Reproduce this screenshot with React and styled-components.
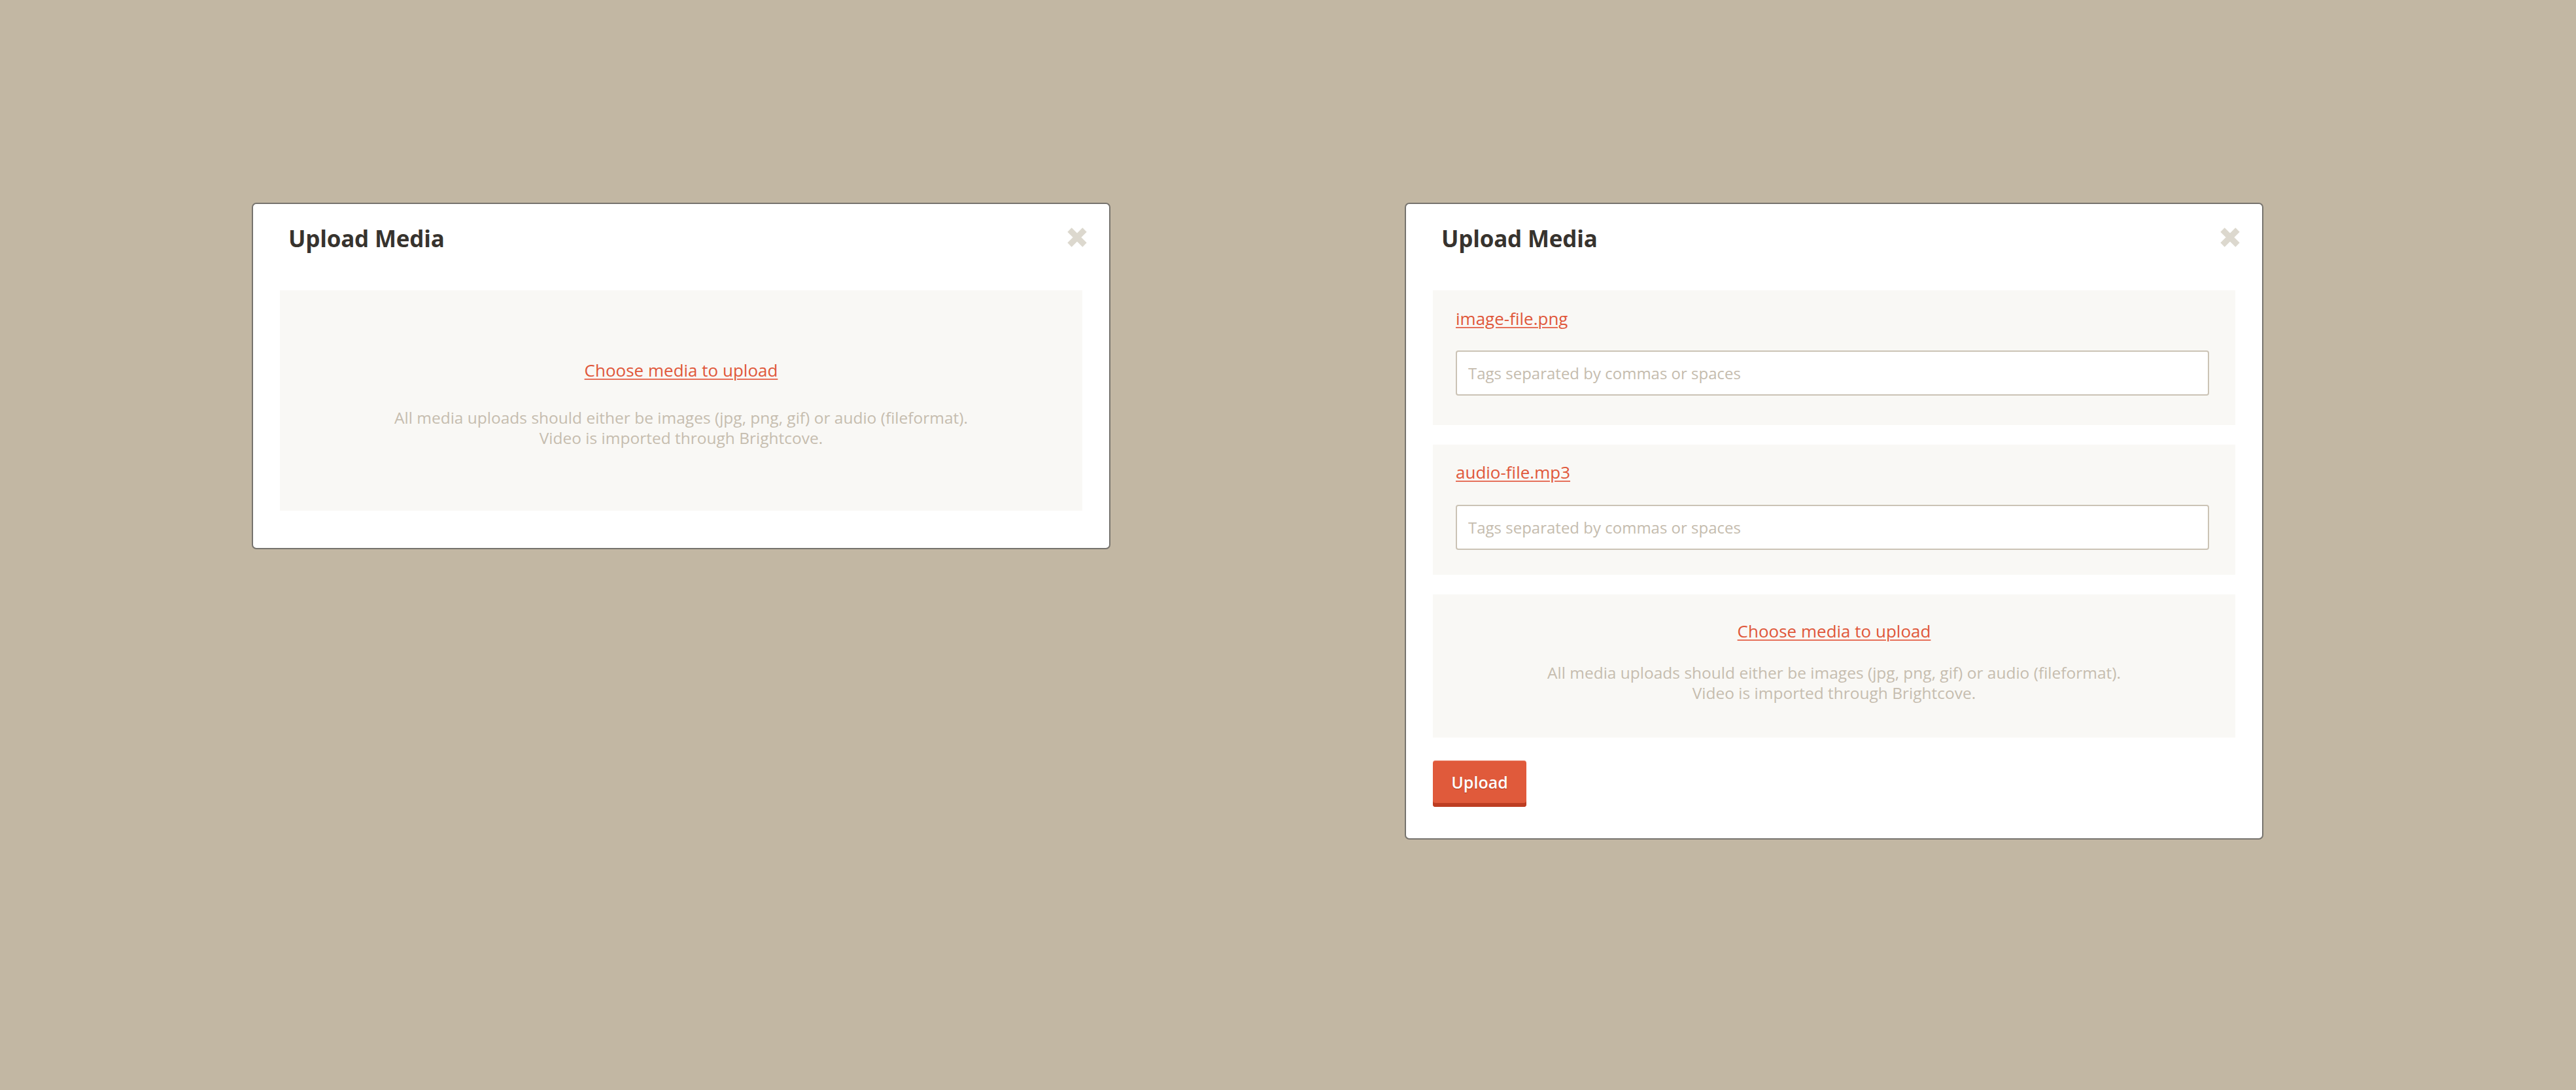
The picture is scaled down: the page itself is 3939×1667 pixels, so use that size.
import React from 'react';
import styled, { createGlobalStyle } from 'styled-components';

const GlobalStyle = createGlobalStyle`
  html, body {
    margin: 0;
    padding: 0;
    background: #c2b7a3;
    min-height: 100%;
  }
  body {
    font-family: 'Open Sans', 'Noto Sans', sans-serif;
    -webkit-font-smoothing: antialiased;
  }
  * {
    box-sizing: border-box;
  }
`;

const files = [
  { name: 'image-file.png', top: 25, gap: 31, bottom: 45 },
  { name: 'audio-file.mp3', top: 24, gap: 32, bottom: 38 },
];

export default function App() {
  return (
    <>
      <GlobalStyle />
      <Page>
        <Modal>
          <Header>
            <Title>Upload Media</Title>
            <CloseButton aria-label="Close">
              <CloseIcon />
            </CloseButton>
          </Header>
          <Body>
            <DropZone $top={104} $gap={39} $bottom={96}>
              <FileLink href="#">Choose media to upload</FileLink>
              <Hint>
                All media uploads should either be images (jpg, png, gif) or audio (fileformat).
                <br />
                Video is imported through Brightcove.
              </Hint>
            </DropZone>
          </Body>
        </Modal>

        <Modal>
          <Header>
            <Title>Upload Media</Title>
            <CloseButton aria-label="Close">
              <CloseIcon />
            </CloseButton>
          </Header>
          <Body>
            {files.map(file => (
              <FileRow key={file.name} $top={file.top} $gap={file.gap} $bottom={file.bottom}>
                <FileLink href="#">{file.name}</FileLink>
                <TagInput placeholder="Tags separated by commas or spaces" />
              </FileRow>
            ))}
            <DropZone $top={38} $gap={30} $bottom={53}>
              <FileLink href="#">Choose media to upload</FileLink>
              <Hint>
                All media uploads should either be images (jpg, png, gif) or audio (fileformat).
                <br />
                Video is imported through Brightcove.
              </Hint>
            </DropZone>
            <UploadButton>Upload</UploadButton>
          </Body>
        </Modal>
      </Page>
    </>
  );
}

function CloseIcon() {
  return (
    <svg width="32" height="32" viewBox="0 0 32 32">
      <path d="M4.5 4.5 L27.5 27.5 M27.5 4.5 L4.5 27.5" stroke="#dcd8ce" strokeWidth="9" fill="none" />
    </svg>
  );
}

const Page = styled.div`
  display: flex;
  align-items: flex-start;
  gap: 450px;
  padding: 310px 0 0 385px;
  min-height: 100vh;
`;

const Modal = styled.div`
  width: 1313px;
  background: #fff;
  border: 2px solid #76736e;
  border-radius: 7px;
  padding: 31px 41px 48px;
  &:first-child {
    padding-bottom: 57px;
  }
`;

const Header = styled.div`
  display: flex;
  align-items: center;
  justify-content: space-between;
  padding-left: 13px;
  margin-right: -8px;
`;

const Title = styled.h2`
  margin: 0;
  font-size: 35px;
  line-height: 44px;
  font-weight: 700;
  color: #37332e;
  letter-spacing: -0.2px;
`;

const CloseButton = styled.button`
  display: flex;
  padding: 0;
  border: 0;
  background: none;
  margin-top: -4px;
  cursor: pointer;
`;

const Body = styled.div`
  display: flex;
  flex-direction: column;
  align-items: flex-start;
  gap: 30px;
  margin-top: 57px;
`;

const Panel = styled.div`
  align-self: stretch;
  display: flex;
  flex-direction: column;
  gap: ${({ $gap }) => $gap}px;
  background: #f9f8f5;
  padding-top: ${({ $top }) => $top}px;
  padding-bottom: ${({ $bottom }) => $bottom}px;
`;

const DropZone = styled(Panel)`
  align-items: center;
  text-align: center;
`;

const FileRow = styled(Panel)`
  align-items: flex-start;
  padding-left: 35px;
  padding-right: 40px;
`;

const FileLink = styled.a`
  font-size: 26px;
  line-height: 36px;
  color: #e0573a;
  text-decoration: underline;
  text-decoration-thickness: 2px;
  text-underline-offset: 3px;
  text-decoration-color: #e6705a;
`;

const Hint = styled.p`
  margin: 0;
  font-size: 24.5px;
  line-height: 31px;
  color: #c6bdaf;
`;

const TagInput = styled.input`
  width: 100%;
  height: 69px;
  border: 2px solid #cbc3b5;
  border-radius: 4px;
  background: #fff;
  padding: 0 17px;
  font-family: inherit;
  font-size: 24px;
  color: #5a544c;
  outline: none;
  &::placeholder {
    color: #c5bcae;
  }
`;

const UploadButton = styled.button`
  margin-top: 5px;
  width: 143px;
  height: 71px;
  padding: 0 0 6px;
  border: 0;
  border-radius: 4px;
  background: #e05a3b;
  box-shadow: inset 0 -6px 0 #bd3d22, inset 0 1px 0 rgba(255, 255, 255, 0.25);
  font-family: inherit;
  font-size: 25px;
  font-weight: 600;
  color: #fff;
  text-shadow: 0 1px 1px rgba(110, 30, 10, 0.45);
  cursor: pointer;
`;
